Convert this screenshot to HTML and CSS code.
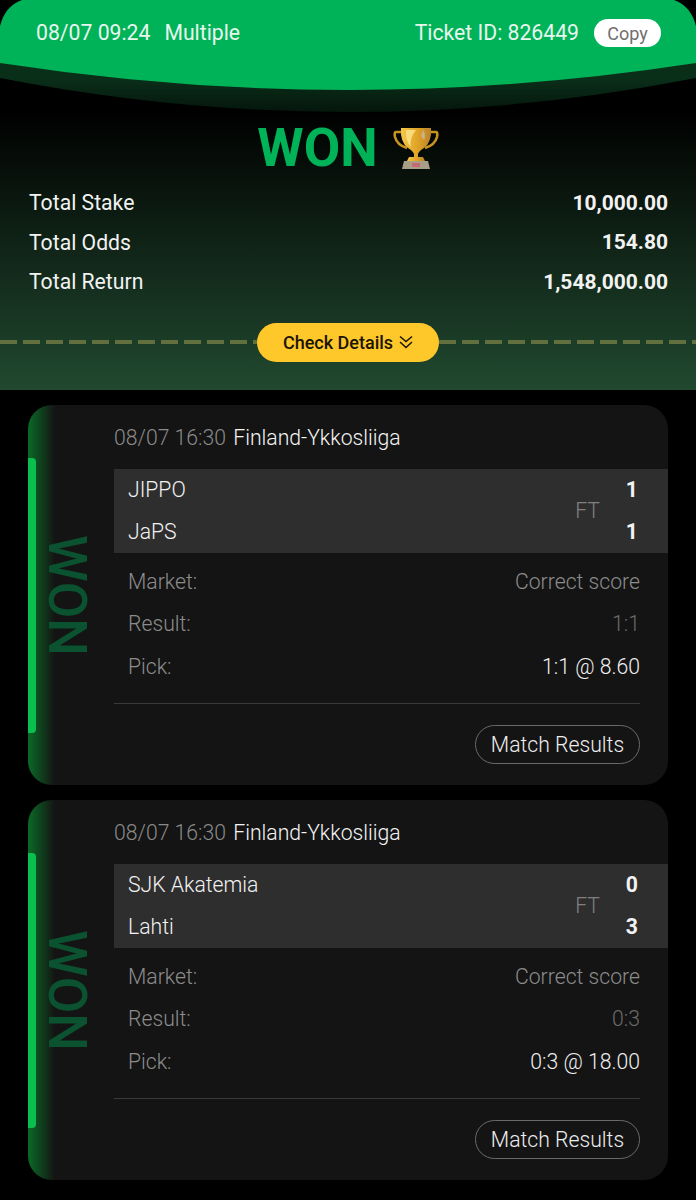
FILE: index.html
```html
<!DOCTYPE html>
<html lang="en">
<head>
<meta charset="UTF-8">
<meta name="viewport" content="width=device-width, initial-scale=1.0">
<title>Ticket 826449</title>
<link rel="stylesheet" href="styles.css">
</head>
<body>
<section class="summary">
  <svg class="arc" width="696" height="114" viewBox="0 0 696 114">
    <defs>
      <linearGradient id="arcShade" x1="0" y1="0" x2="0" y2="1">
        <stop offset="0.45" stop-color="#0a2f19"/>
        <stop offset="1" stop-color="#05160c"/>
      </linearGradient>
    </defs>
    <path d="M0 50 H696 V78 Q348 146 0 78 Z" fill="url(#arcShade)"/>
    <path d="M0 63 V26 Q5 6 22 0 H674 Q691 6 696 26 V63 Q520 90 348 90 Q176 90 0 63 Z" fill="#00b358"/>
  </svg>
  <header class="ticket-head">
    <div class="ticket-info">
      <span>08/07 09:24</span>
      <span>Multiple</span>
    </div>
    <div class="ticket-id">
      <span>Ticket ID: 826449</span>
      <button class="copy-btn">Copy</button>
    </div>
  </header>
  <h1 class="status">WON
    <svg class="trophy" width="46" height="43" viewBox="0 0 46 43">
      <defs>
        <linearGradient id="gold" x1="0" y1="0" x2="1" y2="0">
          <stop offset="0" stop-color="#f4c84a"/>
          <stop offset="0.55" stop-color="#e0a326"/>
          <stop offset="1" stop-color="#b9822a"/>
        </linearGradient>
      </defs>
      <path d="M11 5 H3 Q1 5 2 10 Q4 18 14 21 M35 5 H43 Q45 5 44 10 Q42 18 32 21" fill="none" stroke="#c9931f" stroke-width="2.6"/>
      <path d="M8 1 H38 Q39 15 31 21 Q26 24 25 27 V30 H21 V27 Q20 24 15 21 Q7 15 8 1 Z" fill="url(#gold)"/>
      <path d="M13 3 H23 Q16 11 18 20 Q12 14 13 3 Z" fill="#f8dc7a"/>
      <path d="M30 3 Q33 8 31 13 L28 9 Z" fill="#c9b48a"/>
      <path d="M16 30 H30 L32 34 H14 Z" fill="url(#gold)"/>
      <path d="M11 34 H35 L37 42 H9 Z" fill="#a99f86"/>
      <rect x="19" y="36" width="8" height="4" fill="#c56a74"/>
    </svg>
  </h1>
  <dl class="totals">
    <div class="total-row"><dt>Total Stake</dt><dd>10,000.00</dd></div>
    <div class="total-row"><dt>Total Odds</dt><dd>154.80</dd></div>
    <div class="total-row"><dt>Total Return</dt><dd>1,548,000.00</dd></div>
  </dl>
  <div class="details-row">
    <span class="dashes"></span>
    <button class="details-btn">Check Details
      <svg width="14" height="14" viewBox="0 0 14 14" fill="none" stroke="#1a1405" stroke-width="1.5">
        <path d="M1 1.5 L7 6.5 L13 1.5"/>
        <path d="M1 7 L7 12.5 L13 7"/>
      </svg>
    </button>
    <span class="dashes"></span>
  </div>
</section>

<main class="bets">
  <article class="bet">
    <div class="bet-side">
      <span class="bet-bar"></span>
      <span class="bet-won">WON</span>
    </div>
    <div class="bet-body">
      <div class="bet-title"><span class="bet-time">08/07 16:30</span> Finland-Ykkosliiga</div>
      <div class="teams">
        <div class="team-row"><span>JIPPO</span><b>1</b></div>
        <div class="team-row"><span>JaPS</span><b>1</b></div>
        <span class="ft">FT</span>
      </div>
      <div class="meta-row"><span>Market:</span><span>Correct score</span></div>
      <div class="meta-row"><span>Result:</span><span class="dim">1:1</span></div>
      <div class="meta-row"><span>Pick:</span><span class="pick">1:1 @ 8.60</span></div>
      <div class="bet-foot"><button class="results-btn">Match Results</button></div>
    </div>
  </article>

  <article class="bet">
    <div class="bet-side">
      <span class="bet-bar"></span>
      <span class="bet-won">WON</span>
    </div>
    <div class="bet-body">
      <div class="bet-title"><span class="bet-time">08/07 16:30</span> Finland-Ykkosliiga</div>
      <div class="teams">
        <div class="team-row"><span>SJK Akatemia</span><b>0</b></div>
        <div class="team-row"><span>Lahti</span><b>3</b></div>
        <span class="ft">FT</span>
      </div>
      <div class="meta-row"><span>Market:</span><span>Correct score</span></div>
      <div class="meta-row"><span>Result:</span><span class="dim">0:3</span></div>
      <div class="meta-row"><span>Pick:</span><span class="pick">0:3 @ 18.00</span></div>
      <div class="bet-foot"><button class="results-btn">Match Results</button></div>
    </div>
  </article>
</main>
</body>
</html>
```

FILE: styles.css
```css
* {
  box-sizing: border-box;
}

body {
  margin: 0;
  background-color: #000;
  color: #f2f2f2;
  font-family: Roboto, "Liberation Sans", sans-serif;
  font-size: 21.2px;
}

button {
  font-family: inherit;
}

.summary {
  position: relative;
  height: 390px;
  background: linear-gradient(#000 110px, #21492f 390px);
}

.arc {
  position: absolute;
  top: 0;
  left: 0;
}

.ticket-head {
  position: relative;
  display: flex;
  justify-content: space-between;
  align-items: center;
  height: 65px;
  padding: 0 35px 0 36px;
  color: #e8f6ee;
}

.ticket-info {
  display: flex;
  gap: 14px;
}

.ticket-id {
  display: flex;
  align-items: center;
  gap: 15px;
}

.copy-btn {
  width: 67px;
  height: 28px;
  margin-top: 1px;
  padding: 0;
  border: none;
  border-radius: 14px;
  background-color: #fff;
  color: #6f6f6f;
  font-size: 18px;
}

.status {
  position: relative;
  display: flex;
  justify-content: center;
  align-items: center;
  gap: 15px;
  margin: 50px 0 0;
  height: 66px;
  color: #00b358;
  font-size: 53px;
  font-weight: 700;
  line-height: 66px;
}

.totals {
  margin: 2px 28px 0 29px;
}

.total-row {
  display: flex;
  justify-content: space-between;
  align-items: center;
  height: 39.5px;
}

.total-row dt {
  font-weight: 400;
}

.total-row dd {
  margin: 0;
  font-size: 21px;
  font-weight: 700;
}

.details-row {
  display: flex;
  align-items: center;
  margin-top: 21px;
}

.dashes {
  flex: 1;
  height: 4px;
  background: repeating-linear-gradient(90deg, #62703f 0 17px, transparent 17px 23px);
}

.details-btn {
  display: flex;
  justify-content: center;
  align-items: center;
  gap: 6px;
  width: 182px;
  height: 39px;
  padding: 0;
  border: none;
  border-radius: 20px;
  background-color: #fec72a;
  color: #1a1405;
  font-size: 18px;
  font-weight: 500;
}

.bets {
  display: flex;
  flex-direction: column;
  gap: 15px;
  padding: 15px 28px 0;
}

.bet {
  display: flex;
  height: 380px;
  border-radius: 24px;
  overflow: hidden;
  background: linear-gradient(90deg, #0a6a26, #141414 27px);
}

.bet-side {
  display: flex;
  align-items: center;
  width: 86px;
  flex-shrink: 0;
}

.bet-bar {
  width: 8px;
  height: 275px;
  border-radius: 0 4px 4px 0;
  background-color: #0abf4e;
}

.bet-won {
  margin: 0 0 0 6px;
  writing-mode: vertical-rl;
  color: #0b5230;
  font-size: 53px;
  font-weight: 500;
  line-height: 50px;
}

.bet-body {
  flex: 1;
  padding: 18px 28px 0 0;
}

.bet-title {
  height: 30px;
  line-height: 30px;
  font-weight: 300;
  color: #f5f5f5;
}

.bet-time {
  color: #8a8a8a;
  margin-right: 2px;
}

.teams {
  position: relative;
  display: flow-root;
  margin: 16px -28px 7px 0;
  padding: 0 30px 0 14px;
  height: 84px;
  background-color: #2e2e2e;
}

.team-row {
  display: flex;
  justify-content: space-between;
  align-items: center;
  height: 42px;
  font-weight: 300;
}

.team-row:first-child {
  margin-top: -1px;
}

.team-row b {
  font-weight: 700;
}

.ft {
  position: absolute;
  right: 68px;
  top: 29px;
  color: #808080;
  font-weight: 300;
}

.meta-row {
  display: flex;
  justify-content: space-between;
  align-items: center;
  height: 42.5px;
  padding-left: 14px;
  color: #8c8c8c;
  font-weight: 300;
}

.meta-row .dim {
  color: #6b6b6b;
}

.meta-row .pick {
  color: #f0f0f0;
}

.bet-foot {
  display: flex;
  justify-content: flex-end;
  margin-top: 15px;
  padding-top: 21px;
  border-top: 1px solid #3a3a3a;
}

.results-btn {
  width: 165px;
  height: 39px;
  padding: 0;
  border: 1px solid #6a6a6a;
  border-radius: 20px;
  background: transparent;
  color: #eee;
  font-size: 21.2px;
  font-weight: 300;
}
```
